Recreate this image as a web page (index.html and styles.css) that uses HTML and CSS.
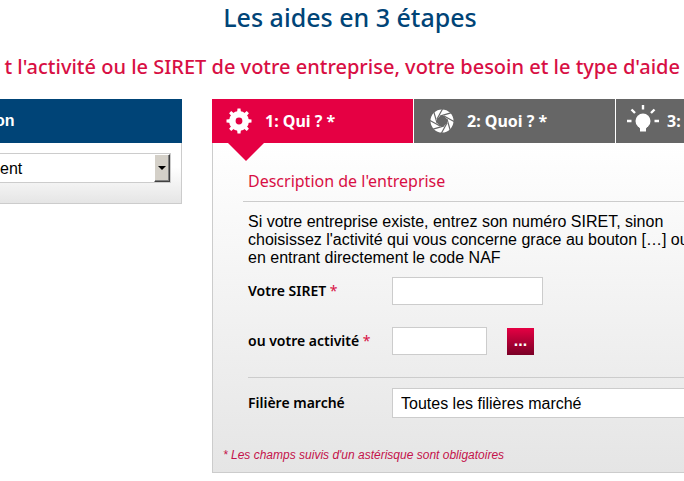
FILE: index.html
```html
<!DOCTYPE html>
<html lang="fr">
  <head>
    <meta charset="utf-8">
    <title>Les aides en 3 étapes</title>
    <link rel="stylesheet" href="styles.css">
  </head>
  <body>

    <header class="intro">
      <h1 class="title">Les aides en 3 étapes</h1>
      <p class="subtitle">t l'activité ou le SIRET de votre entreprise, votre besoin et le type d'aide</p>
    </header>

    <div class="columns">
      <aside class="side">
        <h2 class="side-title"><label for="place">on</label></h2>
        <div class="side-body">
          <div class="select-box">
            <select id="place" class="side-select">
              <option>ent</option>
            </select>
            <span class="select-arrow"></span>
          </div>
        </div>
      </aside>

      <main class="steps">
        <nav class="tabs">
          <button class="tab active" type="button">
            <svg class="icon" viewBox="0 0 32 32">
              <g fill="#fff">
                <path d="M16 6a10 10 0 1 0 0 20a10 10 0 1 0 0-20zM16 12.600a3.400 3.400 0 1 1 0 6.800a3.400 3.400 0 1 1 0-6.800z" fill-rule="evenodd"/>
                <g id="teeth">
                  <path d="M14 8l.5-4.500h3l.5 4.500zM14 24l.5 4.500h3l.5-4.500zM8 14l-4.500.5v3l4.500.5zM24 14l4.500.5v3l-4.500.5z"/>
                </g>
                <use href="#teeth" transform="rotate(45 16 16)"/>
              </g>
            </svg>
            1: Qui ? *
          </button>
          <button class="tab" type="button">
            <svg class="icon" viewBox="0 0 32 32">
              <path d="M17 4.500a11.500 11.500 0 1 0 0 23a11.500 11.500 0 1 0 0-23zM15 11h4l3 3v4l-3 3h-4l-3-3v-4z" fill="#fff" fill-rule="evenodd"/>
              <g stroke="#666" stroke-width="1.200">
                <path id="blade" d="M12 14L17.500 4"/>
                <use href="#blade" transform="rotate(45 17 16)"/>
                <use href="#blade" transform="rotate(90 17 16)"/>
                <use href="#blade" transform="rotate(135 17 16)"/>
                <use href="#blade" transform="rotate(180 17 16)"/>
                <use href="#blade" transform="rotate(225 17 16)"/>
                <use href="#blade" transform="rotate(270 17 16)"/>
                <use href="#blade" transform="rotate(315 17 16)"/>
              </g>
            </svg>
            2: Quoi ? *
          </button>
          <button class="tab last" type="button">
            <svg class="icon" viewBox="0 0 32 32">
              <circle cx="16" cy="16" r="7.500" fill="#fff"/>
              <path d="M11 20.500h10l-2 3v3h-6v-3z" fill="#fff"/>
              <path d="M16 0v4.500M0 16h4.500M27.500 16H32M4.500 4.500l3.500 3.500M27.500 4.500l-3.500 3.500" stroke="#fff" stroke-width="2.400"/>
            </svg>
            3:
          </button>
        </nav>

        <form class="panel">
          <h2 class="panel-title">Description de l'entreprise</h2>
          <p class="help">Si votre entreprise existe, entrez son numéro SIRET, sinon choisissez l'activité qui vous concerne grace au bouton […] ou en entrant directement le code NAF</p>

          <div class="row">
            <label for="siret">Votre SIRET <span class="star">*</span></label>
            <input id="siret" class="field" type="text">
          </div>
          <div class="row">
            <label for="activity">ou votre activité <span class="star">*</span></label>
            <input id="activity" class="field short" type="text">
            <button class="browse" type="button">...</button>
          </div>
          <div class="row market">
            <label for="market">Filière marché</label>
            <select id="market" class="field wide">
              <option>Toutes les filières marché</option>
            </select>
          </div>

          <p class="note">* Les champs suivis d'un astérisque sont obligatoires</p>
        </form>
      </main>
    </div>

  </body>
</html>
```

FILE: styles.css
```css
*,
*:before,
*:after {
  box-sizing: border-box;
}

body {
  margin: 0;
  overflow: hidden;
  background: #fff;
  color: #000;
  font-family: "Liberation Sans", Arial, sans-serif;
  font-size: 16px;
}

h1,
h2,
p {
  margin: 0;
  font-weight: normal;
}

.title,
.subtitle,
.tab,
.panel-title,
.row label {
  font-family: "Noto Sans", "Open Sans", sans-serif;
}

.intro {
  padding: 0 4px 16px 0;
}

.title {
  padding-left: 20px;
  color: #004477;
  font-size: 25px;
  font-weight: 500;
  line-height: 34px;
  text-align: center;
}

/* the line is wider than a small window, its end stays in view */
.subtitle {
  display: flex;
  justify-content: flex-end;
  margin-top: 17px;
  color: #d80f44;
  font-size: 20px;
  font-weight: 500;
  line-height: 32px;
  white-space: nowrap;
}

.columns {
  display: flex;
  align-items: flex-start;
  gap: 30px;
}

.side {
  flex: 0 0 182px;
}

.side-title {
  background: #004477;
  color: #fff;
  font-size: 16px;
  font-weight: bold;
  line-height: 44px;
}

.side-title label {
  margin-left: -5px;
}

.side-body {
  padding: 10px 10px 20px 0;
  border: 1px solid #ccc;
  border-width: 0 1px 1px 0;
  background: linear-gradient(#fff 40%, #e5e5e5);
}

.select-box {
  position: relative;
}

.side-select,
.field {
  appearance: none;
  border: 1px solid #ccc;
  border-radius: 0;
  background: #fff;
  color: #000;
  font-family: inherit;
  font-size: 16px;
}

.side-select {
  display: block;
  width: 100%;
  height: 30px;
  padding: 0;
  border-left: 0;
}

.select-arrow {
  position: absolute;
  top: 1px;
  right: 1px;
  width: 16px;
  height: 28px;
  border: 1px solid;
  border-color: #fff #404040 #404040 #fff;
  background: #d4d0c8;
  box-shadow: inset -1px -1px #808080;
  pointer-events: none;
}

.select-arrow:after {
  content: "";
  display: block;
  margin: 11px 3px;
  border: 4px solid transparent;
  border-top-color: #000;
  border-bottom: 0;
}

.steps {
  flex: 1 0 605px;
}

.tabs {
  display: grid;
  grid-template-columns: repeat(3, 1fr);
  gap: 1px;
}

.tab {
  position: relative;
  display: flex;
  align-items: center;
  gap: 10px;
  height: 44px;
  padding: 0 11px;
  border: 0;
  background: #666;
  color: #fff;
  font-size: 16px;
  font-weight: bold;
  white-space: nowrap;
}

.tab.active {
  background: #e50043;
}

.tab.active:after {
  content: "";
  position: absolute;
  top: 100%;
  left: 16px;
  border: 18px solid transparent;
  border-top-color: #e50043;
  border-bottom: 0;
}

.tab.last {
  gap: 8px;
}

.icon {
  flex: none;
  width: 32px;
  height: 32px;
}

.panel {
  padding: 24px 12px 8px;
  border: 1px solid #ccc;
  border-top: 0;
  background: linear-gradient(#fff, #e5e5e5);
}

.panel-title {
  margin-left: 18px;
  padding: 0 5px 6px;
  border-bottom: 1px solid #ccc;
  color: #d80f44;
  font-size: 16px;
  line-height: 28px;
}

.help {
  max-width: 460px;
  margin: 11px 0 10px 23px;
  line-height: 18px;
}

.row {
  display: flex;
  align-items: center;
  margin: 0 0 22px 23px;
}

.row label {
  width: 144px;
  font-size: 14px;
  font-weight: 600;
  line-height: 18px;
}

.star {
  color: #d80f44;
  font-weight: normal;
}

.field {
  width: 151px;
  height: 28px;
  padding: 0 8px;
}

.field.short {
  width: 95px;
}

.field.wide {
  width: 400px;
  height: 30px;
}

.browse {
  width: 27px;
  height: 27px;
  margin-left: 20px;
  padding: 0;
  border: 0;
  background: linear-gradient(#e50043, #7a0026);
  color: #fff;
  font-size: 16px;
  font-weight: bold;
}

.row.market {
  margin-bottom: 28px;
  padding-top: 10px;
  border-top: 1px solid #ccc;
}

.note {
  margin-left: -2px;
  color: #c4124a;
  font-size: 12px;
  font-style: italic;
  line-height: 18px;
}
```
